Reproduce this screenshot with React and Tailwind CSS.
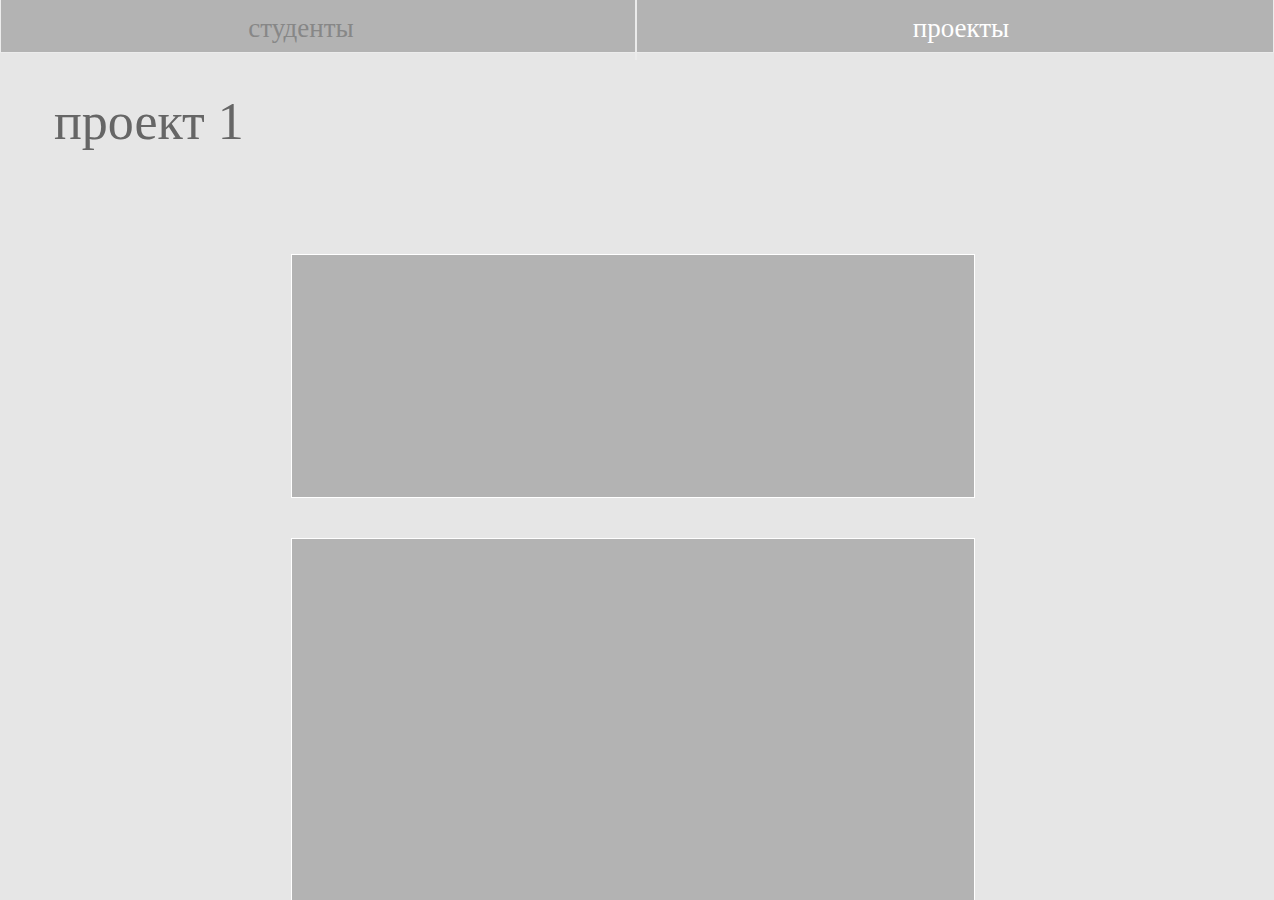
export default function App() {
  return (
    <div className="min-h-[900px] bg-[#e6e6e6] font-['Liberation_Serif',serif] overflow-hidden">
      <nav className="flex items-start h-[53px]">
        <div className="w-[635px] h-[53px] bg-[#b3b3b3] border-l border-b border-[#ececec] flex items-center justify-center pr-[34px] pt-[4px]">
          <span className="text-[27px] text-[#878787] leading-none">студенты</span>
        </div>
        <div className="w-[2px] h-[60px] bg-[#ebebeb] shrink-0" />
        <div className="flex-1 h-[53px] bg-[#b3b3b3] border-r border-b border-[#ececec] flex items-center justify-center pl-[12px] pt-[4px]">
          <span className="text-[27px] text-white leading-none">проекты</span>
        </div>
      </nav>
      <h1 className="pl-[54px] mt-[39px] text-[52px] leading-[60px] text-[#666666]">проект 1</h1>
      <div className="flex flex-col gap-[40px] pl-[291px] mt-[102px]">
        <div className="w-[684px] h-[244px] bg-[#b3b3b3] border border-white" />
        <div className="w-[684px] h-[420px] bg-[#b3b3b3] border border-white" />
      </div>
    </div>
  );
}
